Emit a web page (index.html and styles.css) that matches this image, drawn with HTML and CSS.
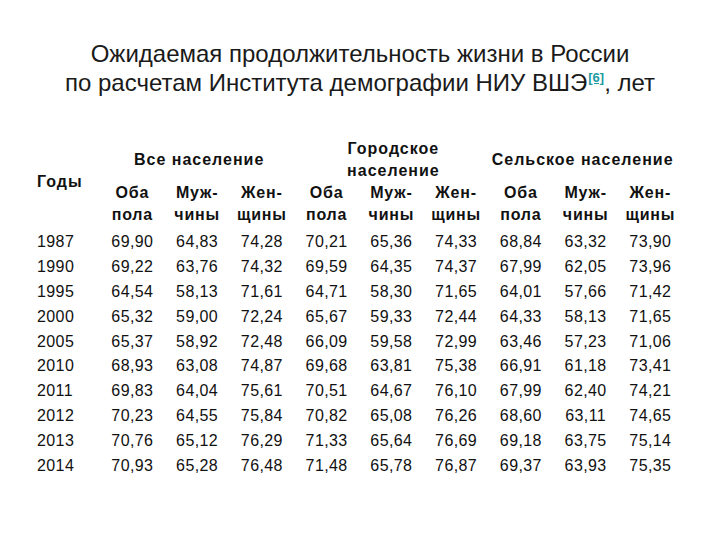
FILE: index.html
```html
<!DOCTYPE html>
<html lang="ru">
<head>
<meta charset="utf-8">
<link rel="stylesheet" href="styles.css">
</head>
<body>
<div class="slide">
  <h1 class="title">Ожидаемая продолжительность жизни в России<br>по расчетам Института демографии НИУ ВШЭ<sup class="ref">[6]</sup>, лет</h1>
  <div class="table">
    <div class="years-head">Годы</div>
    <div class="group g1">Все население</div>
    <div class="group g2">Городское<br>население</div>
    <div class="group g3">Сельское население</div>
    <div class="sub">Оба<br>пола</div>
    <div class="sub">Муж-<br>чины</div>
    <div class="sub">Жен-<br>щины</div>
    <div class="sub">Оба<br>пола</div>
    <div class="sub">Муж-<br>чины</div>
    <div class="sub">Жен-<br>щины</div>
    <div class="sub">Оба<br>пола</div>
    <div class="sub">Муж-<br>чины</div>
    <div class="sub">Жен-<br>щины</div>

    <div class="yr">1987</div><div class="v">69,90</div><div class="v">64,83</div><div class="v">74,28</div><div class="v">70,21</div><div class="v">65,36</div><div class="v">74,33</div><div class="v">68,84</div><div class="v">63,32</div><div class="v">73,90</div>
    <div class="yr">1990</div><div class="v">69,22</div><div class="v">63,76</div><div class="v">74,32</div><div class="v">69,59</div><div class="v">64,35</div><div class="v">74,37</div><div class="v">67,99</div><div class="v">62,05</div><div class="v">73,96</div>
    <div class="yr">1995</div><div class="v">64,54</div><div class="v">58,13</div><div class="v">71,61</div><div class="v">64,71</div><div class="v">58,30</div><div class="v">71,65</div><div class="v">64,01</div><div class="v">57,66</div><div class="v">71,42</div>
    <div class="yr">2000</div><div class="v">65,32</div><div class="v">59,00</div><div class="v">72,24</div><div class="v">65,67</div><div class="v">59,33</div><div class="v">72,44</div><div class="v">64,33</div><div class="v">58,13</div><div class="v">71,65</div>
    <div class="yr">2005</div><div class="v">65,37</div><div class="v">58,92</div><div class="v">72,48</div><div class="v">66,09</div><div class="v">59,58</div><div class="v">72,99</div><div class="v">63,46</div><div class="v">57,23</div><div class="v">71,06</div>
    <div class="yr">2010</div><div class="v">68,93</div><div class="v">63,08</div><div class="v">74,87</div><div class="v">69,68</div><div class="v">63,81</div><div class="v">75,38</div><div class="v">66,91</div><div class="v">61,18</div><div class="v">73,41</div>
    <div class="yr">2011</div><div class="v">69,83</div><div class="v">64,04</div><div class="v">75,61</div><div class="v">70,51</div><div class="v">64,67</div><div class="v">76,10</div><div class="v">67,99</div><div class="v">62,40</div><div class="v">74,21</div>
    <div class="yr">2012</div><div class="v">70,23</div><div class="v">64,55</div><div class="v">75,84</div><div class="v">70,82</div><div class="v">65,08</div><div class="v">76,26</div><div class="v">68,60</div><div class="v">63,11</div><div class="v">74,65</div>
    <div class="yr">2013</div><div class="v">70,76</div><div class="v">65,12</div><div class="v">76,29</div><div class="v">71,33</div><div class="v">65,64</div><div class="v">76,69</div><div class="v">69,18</div><div class="v">63,75</div><div class="v">75,14</div>
    <div class="yr">2014</div><div class="v">70,93</div><div class="v">65,28</div><div class="v">76,48</div><div class="v">71,48</div><div class="v">65,78</div><div class="v">76,87</div><div class="v">69,37</div><div class="v">63,93</div><div class="v">75,35</div>
  </div>
</div>
</body>
</html>
```
FILE: styles.css
```css
html, body {
  margin: 0;
  padding: 0;
  background: #ffffff;
}
body {
  font-family: "Liberation Sans", Arial, sans-serif;
  color: #111111;
}
.slide {
  width: 720px;
  height: 540px;
  box-sizing: border-box;
  padding-top: 39px;
}
.title {
  margin: 0;
  font-weight: normal;
  font-size: 24px;
  line-height: 29px;
  text-align: center;
  color: #1a1a1a;
}
.ref {
  font-size: 13px;
  font-weight: bold;
  color: #1f9aa2;
  text-decoration: underline;
  vertical-align: 9px;
  line-height: 0;
  margin-left: 1px;
}
.table {
  margin-top: 41px;
  padding-left: 37px;
  display: grid;
  grid-template-columns: 63px repeat(9, 64.75px);
  grid-template-rows: 44px 44px repeat(10, 24.9px);
  font-size: 16px;
  letter-spacing: 0.4px;
}
.years-head {
  grid-column: 1;
  grid-row: 1 / span 2;
  align-self: center;
  font-weight: bold;
  line-height: 22px;
  letter-spacing: 1px;
}
.group {
  grid-row: 1;
  align-self: center;
  text-align: center;
  font-weight: bold;
  line-height: 22px;
  letter-spacing: 1px;
}
.g1 { grid-column: 2 / span 3; margin-left: 4px; }
.g2 { grid-column: 5 / span 3; margin-left: 4px; }
.g3 { grid-column: 8 / span 3; margin-left: -6px; }
.sub {
  grid-row: 2;
  text-align: center;
  font-weight: bold;
  line-height: 22px;
  letter-spacing: 0.8px;
}
.yr {
  grid-column: 1;
  line-height: 24.9px;
  margin-top: 4px;
}
.v {
  text-align: center;
  line-height: 24.9px;
  margin-top: 4px;
}
```
